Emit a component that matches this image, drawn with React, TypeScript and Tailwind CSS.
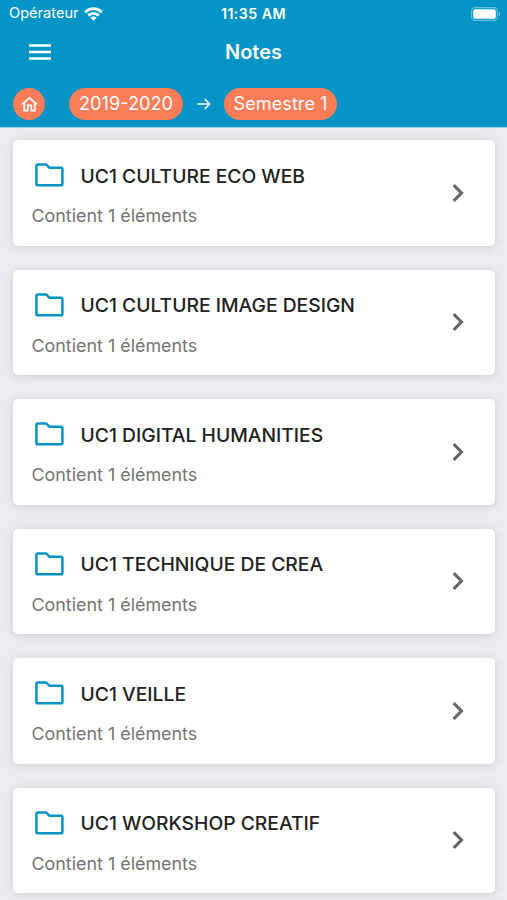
import { MdOutlineHome } from "react-icons/md";

type Folder = {
    id: number;
    name: string;
    count: number;
};

const FOLDERS: Folder[] = [
    { id: 1, name: "UC1 CULTURE ECO WEB", count: 1 },
    { id: 2, name: "UC1 CULTURE IMAGE DESIGN", count: 1 },
    { id: 3, name: "UC1 DIGITAL HUMANITIES", count: 1 },
    { id: 4, name: "UC1 TECHNIQUE DE CREA", count: 1 },
    { id: 5, name: "UC1 VEILLE", count: 1 },
    { id: 6, name: "UC1 WORKSHOP CREATIF", count: 1 },
];

const WifiIcon = () => (
    <svg width="19" height="14" viewBox="0 0 19 14" fill="none" stroke="white" strokeWidth="2.7">
        <path d="M1.2 5.2C5.8.5 13.2.5 17.8 5.2" />
        <path d="M4.3 8.5c2.9-2.9 7.5-2.9 10.4 0" />
        <path d="M9.5 13.8 6.4 10.8c1.7-1.7 4.5-1.7 6.2 0z" fill="white" stroke="none" />
    </svg>
);

const BatteryIcon = () => (
    <svg width="30" height="14" viewBox="0 0 30 14" fill="none">
        <rect x="0.6" y="0.6" width="25.8" height="12.8" rx="3.6" stroke="white" strokeOpacity="0.4" strokeWidth="1.1" />
        <rect x="2.2" y="2.2" width="22.6" height="9.6" rx="2.2" fill="white" />
        <path d="M27.8 4.8c1.8.7 1.8 3.7 0 4.4z" fill="white" fillOpacity="0.45" />
    </svg>
);

const MenuIcon = () => (
    <svg width="22" height="16" viewBox="0 0 22 16" fill="white">
        <path d="M0 .3h22v2.4H0zM0 6.8h22v2.4H0zM0 13.3h22v2.4H0z" />
    </svg>
);

const ArrowIcon = () => (
    <svg width="14" height="12" viewBox="0 0 14 12" fill="none" stroke="white" strokeWidth="1.5">
        <path d="M.5 6h12M7.8 1.1 12.7 6l-4.9 4.9" />
    </svg>
);

const FolderIcon = () => (
    <svg className="mb-[2px]" width="29" height="24" viewBox="0 0 29 24" fill="none" stroke="#0594c2" strokeWidth="2.5" strokeLinejoin="round">
        <path d="M2.7 1.6h7.8c.6 0 1 .2 1.4.6l2.4 2.5h11.8c.8 0 1.3.5 1.3 1.3v15c0 .8-.5 1.3-1.3 1.3H2.7c-.8 0-1.3-.5-1.3-1.3V2.9c0-.8.5-1.3 1.3-1.3z" />
    </svg>
);

const ChevronIcon = () => (
    <svg width="12" height="20" viewBox="0 0 12 20" fill="none" stroke="#666666" strokeWidth="3.1">
        <path d="m1.7 2.1 7.8 7.9-7.8 7.9" />
    </svg>
);

const StatusBar = () => (
    <div className="grid grid-cols-3 items-center h-7 pl-[9px] pr-[6px] text-white">
        <div className="flex items-center gap-[5px] text-[14.6px]">
            <span>Opérateur</span>
            <WifiIcon />
        </div>
        <div className="-ml-[3px] text-center text-[14.2px] font-semibold tracking-[0.45px]">11:35 AM</div>
        <div className="flex justify-end">
            <BatteryIcon />
        </div>
    </div>
);

const FolderCard = ({ folder }: { folder: Folder }) => (
    <li className="flex items-center justify-between h-[105.5px] shrink-0 rounded-[5px] bg-white pl-[19px] pr-[31px] shadow-[0_1px_9px_rgba(0,0,0,0.13)]">
        <div className="pt-[7px]">
            <div className="flex items-center gap-[17px] h-7 pl-[3px]">
                <FolderIcon />
                <h2 className="-ml-[0.5px] text-[19.3px] font-[550] text-[#222222]">{folder.name}</h2>
            </div>
            <p className="mt-3 -ml-[0.5px] text-[17.9px] leading-7 text-[#757575]">Contient {folder.count} éléments</p>
        </div>
        <ChevronIcon />
    </li>
);

const App = () => {
    return (
        <div className="flex flex-col h-[900px] w-[507px] overflow-hidden bg-[#ecebf0] font-['Inter','Liberation_Sans',sans-serif]">
            <header className="h-32 shrink-0 border-b border-[#a5d3e5] bg-[#0494c5]">
                <StatusBar />
                <div className="grid grid-cols-3 items-center h-12 px-[29px] text-white">
                    <MenuIcon />
                    <h1 className="text-center text-[20px] font-semibold">Notes</h1>
                </div>
                <nav className="flex items-center h-14 pl-[13px] text-[18.2px] text-white">
                    <span className="flex items-center justify-center size-8 rounded-full bg-[#fa7d58]">
                        <MdOutlineHome size={21} />
                    </span>
                    <span className="flex items-center justify-center h-8 w-[114px] ml-6 rounded-full bg-[#fa7d58]">2019-2020</span>
                    <span className="flex justify-center w-[41px]">
                        <ArrowIcon />
                    </span>
                    <span className="flex items-center justify-center h-8 w-[113px] rounded-full bg-[#fa7d58]">Semestre 1</span>
                </nav>
            </header>
            <ul className="flex flex-col gap-6 px-[13px] pr-3 pt-3">
                {FOLDERS.map((folder) => (
                    <FolderCard key={folder.id} folder={folder} />
                ))}
            </ul>
        </div>
    );
};

export default App;
